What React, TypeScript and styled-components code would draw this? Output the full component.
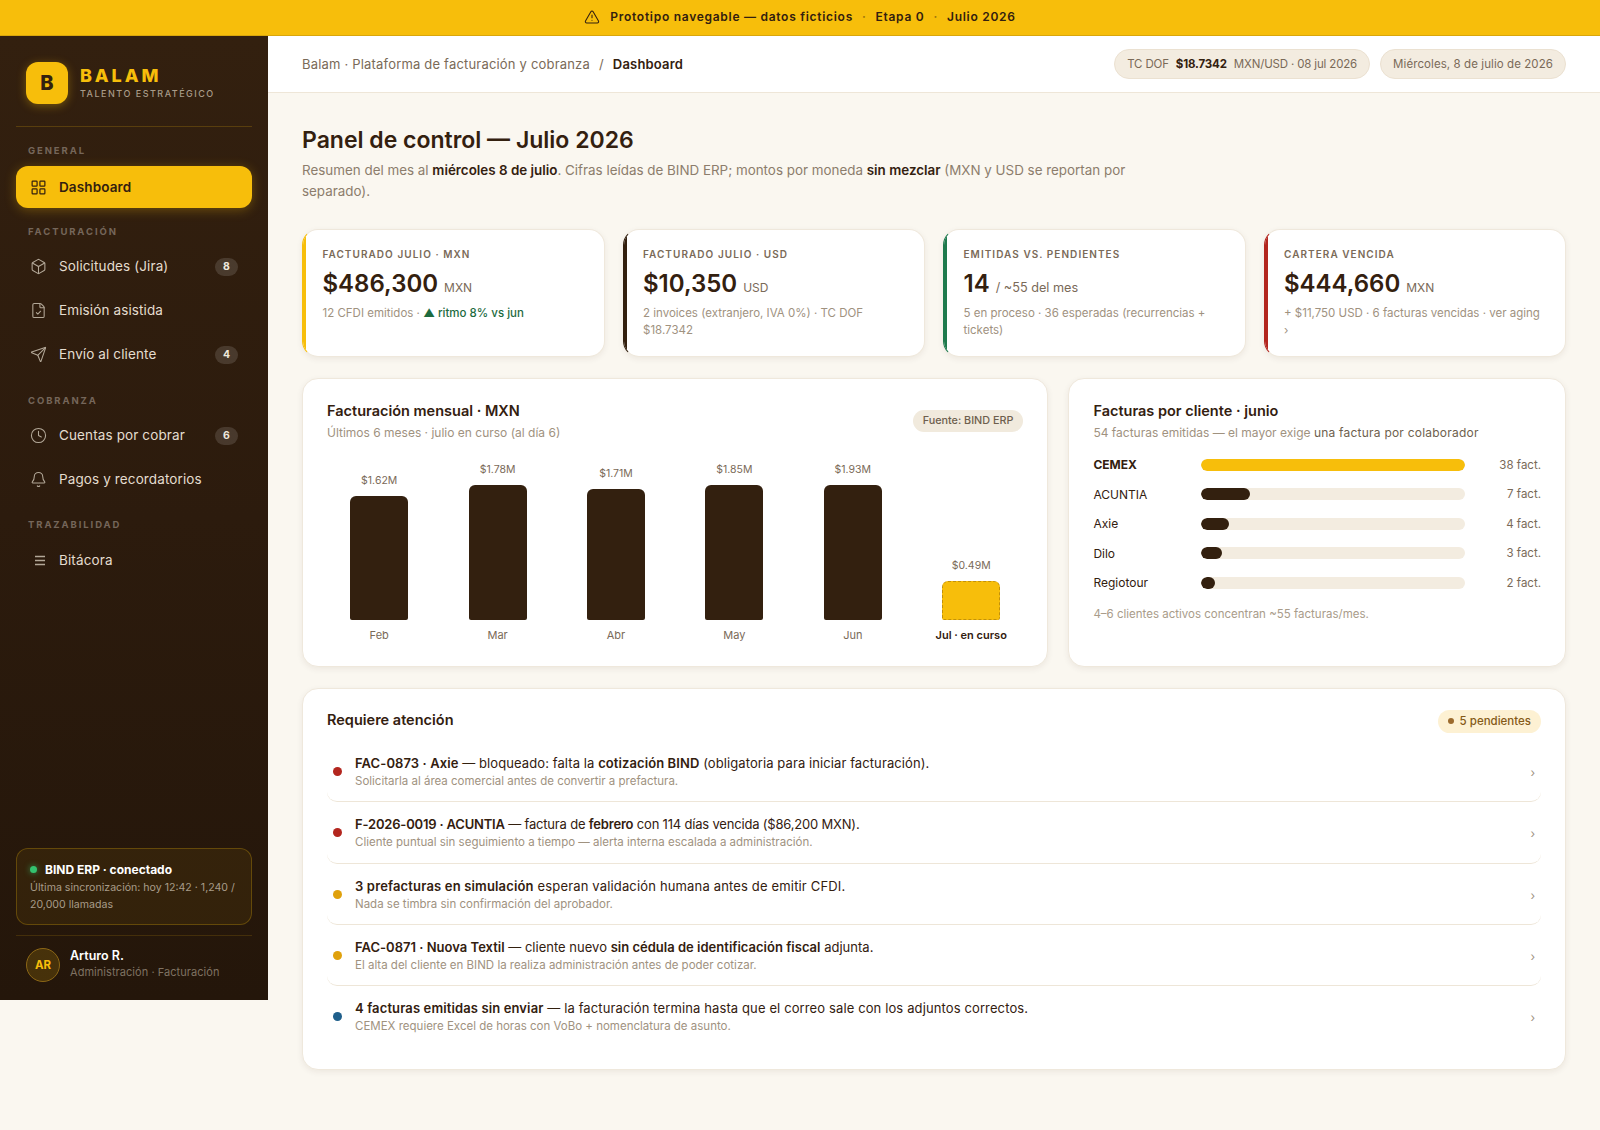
import React from 'react';
import styled, { createGlobalStyle } from 'styled-components';
import { Bell, Box, Clock, FileCheck, LayoutGrid, Send, TriangleAlert } from 'lucide-react';

const GOLD = '#f7be0b';
const DARK = '#33200f';

const GlobalStyle = createGlobalStyle`
  html, body {
    margin: 0;
    padding: 0;
    background: #faf7f0;
  }
  body {
    font-family: 'Inter', 'Noto Sans', sans-serif;
    color: ${DARK};
  }
  * {
    box-sizing: border-box;
  }
`;

const Page = styled.div`
  min-height: 1130px;
  display: flex;
  flex-direction: column;
`;

const Banner = styled.div`
  height: 36px;
  padding-bottom: 2px;
  display: flex;
  align-items: center;
  justify-content: center;
  gap: 10px;
  background: ${GOLD};
  border-bottom: 1px solid #d9a60c;
  font-size: 12px;
  font-weight: 600;
  letter-spacing: 0.72px;
  color: ${DARK};
`;

const BannerDot = styled.span`
  opacity: 0.45;
  margin: 0 -1px;
`;

const Shell = styled.div`
  display: flex;
  flex: 1;
  align-items: flex-start;
`;

const Sidebar = styled.aside`
  width: 268px;
  height: 964px;
  flex-shrink: 0;
  padding: 0 16px;
  display: flex;
  flex-direction: column;
  background: linear-gradient(180deg, #33200f 0%, #2c1b0d 50%, #24160a 100%);
`;

const Brand = styled.div`
  height: 91px;
  padding: 26px 10px 0;
  display: flex;
  gap: 12px;
  border-bottom: 1px solid rgba(247, 190, 11, 0.2);
`;

const LogoMark = styled.div`
  width: 42px;
  height: 42px;
  border-radius: 12px;
  display: flex;
  align-items: center;
  justify-content: center;
  background: ${GOLD};
  color: ${DARK};
  font-size: 20px;
  font-weight: 800;
  box-shadow: 0 2px 10px rgba(247, 190, 11, 0.35);
`;

const BrandText = styled.div`
  padding-top: 4px;
`;

const BrandName = styled.div`
  font-size: 18px;
  line-height: 20px;
  font-weight: 800;
  letter-spacing: 2.9px;
  color: ${GOLD};
`;

const BrandTag = styled.div`
  margin-top: 2px;
  font-size: 9px;
  line-height: 12px;
  font-weight: 500;
  letter-spacing: 1.5px;
  color: #a99b88;
`;

const SectionLabel = styled.div<{ $top?: number; $bottom?: number }>`
  margin: ${p => p.$top ?? 18}px 0 ${p => p.$bottom ?? 7}px;
  padding-left: 12px;
  height: 14px;
  line-height: 14px;
  font-size: 9.5px;
  font-weight: 700;
  letter-spacing: 1.9px;
  color: #75665a;
`;

const NavList = styled.div`
  display: flex;
  flex-direction: column;
  gap: 2px;
`;

const NavItem = styled.div<{ $active?: boolean }>`
  height: 42px;
  padding: 0 14px;
  display: flex;
  align-items: center;
  gap: 12px;
  border-radius: 12px;
  font-size: 13.5px;
  font-weight: ${p => (p.$active ? 600 : 400)};
  letter-spacing: 0.12px;
  color: ${p => (p.$active ? DARK : '#e4dccf')};
  background: ${p => (p.$active ? GOLD : 'transparent')};
  box-shadow: ${p => (p.$active ? '0 2px 12px rgba(247, 190, 11, 0.3)' : 'none')};
  svg {
    flex-shrink: 0;
    color: ${p => (p.$active ? DARK : '#b3a898')};
  }
`;

const NavText = styled.span`
  flex: 1;
  padding-bottom: 1px;
`;

const NavBadge = styled.span`
  width: 23px;
  height: 18px;
  border-radius: 9px;
  display: flex;
  align-items: center;
  justify-content: center;
  background: rgba(255, 255, 255, 0.13);
  color: #efe8dc;
  font-size: 10.5px;
  font-weight: 700;
`;

const SidebarSpacer = styled.div`
  flex: 1;
`;

const StatusBox = styled.div`
  height: 77px;
  padding: 12px 13px;
  border-radius: 12px;
  border: 1px solid rgba(247, 190, 11, 0.25);
  background: rgba(247, 190, 11, 0.07);
`;

const StatusTitle = styled.div`
  display: flex;
  align-items: center;
  gap: 8px;
  height: 17px;
  font-size: 12px;
  font-weight: 700;
  color: #fff;
`;

const StatusDot = styled.span`
  width: 7px;
  height: 7px;
  border-radius: 50%;
  background: #34c26f;
  box-shadow: 0 0 6px rgba(52, 194, 111, 0.7);
`;

const StatusText = styled.div`
  margin-top: 1px;
  font-size: 10.6px;
  line-height: 17px;
  color: #a89c89;
`;

const UserRow = styled.div`
  height: 65px;
  margin-top: 10px;
  padding: 12px 10px 0;
  display: flex;
  gap: 10px;
  border-top: 1px solid rgba(247, 190, 11, 0.15);
`;

const Avatar = styled.div`
  width: 34px;
  height: 34px;
  border-radius: 50%;
  display: flex;
  align-items: center;
  justify-content: center;
  background: rgba(247, 190, 11, 0.16);
  border: 1px solid #8c6716;
  color: ${GOLD};
  font-size: 11.5px;
  font-weight: 700;
`;

const UserName = styled.div`
  font-size: 12.5px;
  line-height: 16px;
  font-weight: 600;
  color: #fff;
`;

const UserRole = styled.div`
  font-size: 11px;
  line-height: 16px;
  letter-spacing: 0.05px;
  color: #7f7262;
`;

const Main = styled.main`
  flex: 1;
  min-width: 0;
`;

const Topbar = styled.header`
  height: 57px;
  padding: 0 34px;
  display: flex;
  align-items: center;
  justify-content: space-between;
  background: #fff;
  border-bottom: 1px solid #eee6d8;
`;

const Crumbs = styled.div`
  padding-bottom: 1px;
  display: flex;
  align-items: center;
  gap: 9px;
  font-size: 13px;
  letter-spacing: 0.19px;
  color: #7a6a58;
`;

const CrumbCurrent = styled.span`
  font-weight: 600;
  color: ${DARK};
`;

const TopPills = styled.div`
  display: flex;
  gap: 10px;
`;

const TopPill = styled.div<{ $dense?: boolean }>`
  height: 30px;
  padding: 0 12px 1px;
  display: flex;
  align-items: center;
  gap: 7px;
  border-radius: 15px;
  background: #f3ece0;
  border: 1px solid #ebe1d1;
  font-size: 11.5px;
  letter-spacing: ${p => (p.$dense ? '-0.16px' : '0.08px')};
  color: #7a6a58;
  b {
    font-weight: 700;
    color: ${DARK};
  }
`;

const Content = styled.div`
  padding: 29px 34px 40px;
`;

const Title = styled.h1`
  margin: 0;
  font-size: 23px;
  line-height: 36px;
  font-weight: 600;
  color: ${DARK};
`;

const Lead = styled.p`
  margin: 2px 0 0;
  max-width: 860px;
  font-size: 13.4px;
  line-height: 20.5px;
  color: #8c7d6c;
  b {
    font-weight: 600;
    color: ${DARK};
  }
`;

const KpiRow = styled.div`
  margin-top: 27.5px;
  display: grid;
  grid-template-columns: repeat(4, 1fr);
  gap: 18px;
`;

const Card = styled.section`
  background: #fff;
  border: 1px solid #efe8dc;
  border-radius: 16px;
  box-shadow: 0 2px 6px rgba(51, 32, 15, 0.07);
`;

const KpiCard = styled(Card)<{ $accent: string }>`
  position: relative;
  overflow: hidden;
  height: 128px;
  padding: 17.5px 22px 0 19.5px;
  border-left-color: ${p => p.$accent};
  &::before {
    content: '';
    position: absolute;
    left: 0;
    top: 0;
    bottom: 0;
    width: 3px;
    background: ${p => p.$accent};
  }
`;

const KpiLabel = styled.div`
  font-size: 10px;
  line-height: 14px;
  font-weight: 600;
  letter-spacing: 1.05px;
  color: #7a6a58;
`;

const KpiValue = styled.div`
  margin-top: 5px;
  height: 36px;
  display: flex;
  align-items: baseline;
  gap: 6px;
  font-size: 24px;
  line-height: 36px;
  font-weight: 600;
  color: ${DARK};
`;

const KpiUnit = styled.span<{ $long?: boolean }>`
  font-size: ${p => (p.$long ? '12.7px' : '12px')};
  font-weight: 400;
  color: #7a6a58;
`;

const KpiSub = styled.div`
  margin-top: 3px;
  font-size: 11.5px;
  line-height: 16.5px;
  color: #a0927f;
`;

const Up = styled.span`
  font-weight: 500;
  color: #1d6b3f;
`;

const ChartRow = styled.div`
  margin-top: 21px;
  display: grid;
  grid-template-columns: 3fr 2fr;
  gap: 20px;
`;

const Panel = styled(Card)`
  padding: 20px 24px 0;
`;

const ChartPanel = styled(Panel)`
  height: 289px;
`;

const PanelHead = styled.div`
  display: flex;
  align-items: flex-start;
  justify-content: space-between;
`;

const PanelTitle = styled.h2`
  margin: 0;
  font-size: 14.5px;
  line-height: 24px;
  font-weight: 600;
  color: ${DARK};
`;

const PanelSub = styled.div`
  margin-top: 1px;
  font-size: 12px;
  line-height: 18px;
  color: #a0927f;
  b {
    font-weight: 400;
    letter-spacing: 0.22px;
    color: #6e5f4e;
  }
`;

const SourcePill = styled.span`
  margin-top: 11px;
  height: 22px;
  padding: 0 10px;
  display: flex;
  align-items: center;
  border-radius: 11px;
  background: #f1eadd;
  font-size: 10.8px;
  font-weight: 500;
  color: #6e5f4e;
`;

const Bars = styled.div`
  margin-top: 11px;
  height: 190.5px;
  display: grid;
  grid-template-columns: repeat(6, 1fr);
  gap: 14px;
`;

const BarCol = styled.div`
  display: flex;
  flex-direction: column;
  align-items: center;
  justify-content: flex-end;
`;

const BarValue = styled.div`
  margin-bottom: 7px;
  font-size: 10.5px;
  line-height: 16px;
  color: #7a6a58;
`;

const Bar = styled.div<{ $current?: boolean }>`
  width: 58px;
  border-radius: 6px 6px 2px 2px;
  background: ${p => (p.$current ? GOLD : DARK)};
  border: ${p => (p.$current ? '1px dashed #c2910a' : 'none')};
`;

const BarMonth = styled.div<{ $current?: boolean }>`
  margin-top: 7px;
  font-size: 11px;
  line-height: 16px;
  font-weight: ${p => (p.$current ? 600 : 400)};
  color: ${p => (p.$current ? DARK : '#7a6a58')};
`;

const ClientList = styled.div`
  margin-top: 14px;
  display: flex;
  flex-direction: column;
  gap: 11.5px;
`;

const ClientRow = styled.div`
  height: 18px;
  display: grid;
  grid-template-columns: 96px 1fr 64px;
  column-gap: 12px;
  align-items: center;
`;

const ClientName = styled.div<{ $top?: boolean }>`
  font-size: 12px;
  font-weight: ${p => (p.$top ? 700 : 400)};
  color: ${DARK};
`;

const Track = styled.div`
  height: 12px;
  border-radius: 6px;
  background: #f3ece0;
  overflow: hidden;
`;

const Fill = styled.div<{ $top?: boolean }>`
  height: 100%;
  border-radius: 6px;
  background: ${p => (p.$top ? GOLD : DARK)};
`;

const ClientCount = styled.div`
  text-align: right;
  font-size: 11.5px;
  color: #7a6a58;
`;

const ClientNote = styled.div`
  margin-top: 14px;
  font-size: 11.5px;
  line-height: 17px;
  color: #a99c8a;
`;

const AttentionPanel = styled(Panel)`
  margin-top: 21px;
  height: 382px;
`;

const AttentionHead = styled.div`
  height: 32.5px;
  display: flex;
  align-items: flex-start;
  justify-content: space-between;
  ${PanelTitle} {
    margin-top: -1px;
  }
`;

const PendingPill = styled.span`
  margin-top: 1.5px;
  height: 23px;
  padding: 0 10px 1px;
  display: flex;
  align-items: center;
  gap: 6px;
  border-radius: 12px;
  background: #fdf1d3;
  font-size: 11.5px;
  font-weight: 500;
  color: #855a17;
  &::before {
    content: '';
    width: 6px;
    height: 6px;
    border-radius: 50%;
    background: #9c6b2e;
  }
`;

const AlertRow = styled.div<{ $last?: boolean }>`
  height: 61.35px;
  padding: 12px 6px 0;
  display: flex;
  align-items: flex-start;
  gap: 13px;
  border-radius: 0 0 10px 10px;
  border-bottom: ${p => (p.$last ? 'none' : '1px solid #eee6d8')};
`;

const AlertDot = styled.span<{ $color: string }>`
  width: 9px;
  height: 9px;
  margin-top: 14px;
  flex-shrink: 0;
  border-radius: 50%;
  background: ${p => p.$color};
`;

const AlertBody = styled.div`
  flex: 1;
`;

const AlertTitle = styled.div<{ $track: number }>`
  font-size: 13px;
  line-height: 20px;
  letter-spacing: ${p => p.$track}px;
  color: ${DARK};
  b {
    font-weight: 600;
  }
`;

const AlertSub = styled.div`
  font-size: 11.5px;
  line-height: 17px;
  color: #a0927f;
`;

const Chevron = styled.span`
  margin-top: 12px;
  font-size: 12px;
  line-height: 16px;
  color: #a0927f;
`;

const MenuLines: React.FC = () => (
  <svg width="17" height="17" viewBox="0 0 17 17" fill="none" stroke="currentColor" strokeWidth="1.4">
    <path d="M5 4.5h10M5 8.5h10M5 12.5h10" />
  </svg>
);

const months = [
  { month: 'Feb', value: '$1.62M', height: 124 },
  { month: 'Mar', value: '$1.78M', height: 135 },
  { month: 'Abr', value: '$1.71M', height: 131 },
  { month: 'May', value: '$1.85M', height: 135 },
  { month: 'Jun', value: '$1.93M', height: 135 },
  { month: 'Jul · en curso', value: '$0.49M', height: 39, current: true },
];

const clients = [
  { name: 'CEMEX', count: 38 },
  { name: 'ACUNTIA', count: 7 },
  { name: 'Axie', count: 4 },
  { name: 'Dilo', count: 3 },
  { name: 'Regiotour', count: 2 },
];

const Sidebarnav: React.FC = () => (
  <Sidebar>
    <Brand>
      <LogoMark>B</LogoMark>
      <BrandText>
        <BrandName>BALAM</BrandName>
        <BrandTag>TALENTO ESTRATÉGICO</BrandTag>
      </BrandText>
    </Brand>
    <SectionLabel $top={17} $bottom={8}>GENERAL</SectionLabel>
    <NavList>
      <NavItem $active>
        <LayoutGrid size={17} strokeWidth={1.7} />
        <NavText>Dashboard</NavText>
      </NavItem>
    </NavList>
    <SectionLabel $top={16.5}>FACTURACIÓN</SectionLabel>
    <NavList>
      <NavItem>
        <Box size={17} strokeWidth={1.5} />
        <NavText>Solicitudes (Jira)</NavText>
        <NavBadge>8</NavBadge>
      </NavItem>
      <NavItem>
        <FileCheck size={17} strokeWidth={1.5} />
        <NavText>Emisión asistida</NavText>
      </NavItem>
      <NavItem>
        <Send size={17} strokeWidth={1.5} />
        <NavText>Envío al cliente</NavText>
        <NavBadge>4</NavBadge>
      </NavItem>
    </NavList>
    <SectionLabel>COBRANZA</SectionLabel>
    <NavList>
      <NavItem>
        <Clock size={17} strokeWidth={1.5} />
        <NavText>Cuentas por cobrar</NavText>
        <NavBadge>6</NavBadge>
      </NavItem>
      <NavItem>
        <Bell size={17} strokeWidth={1.5} />
        <NavText>Pagos y recordatorios</NavText>
      </NavItem>
    </NavList>
    <SectionLabel $top={17} $bottom={8}>TRAZABILIDAD</SectionLabel>
    <NavList>
      <NavItem>
        <MenuLines />
        <NavText>Bitácora</NavText>
      </NavItem>
    </NavList>
    <SidebarSpacer />
    <StatusBox>
      <StatusTitle>
        <StatusDot />
        BIND ERP · conectado
      </StatusTitle>
      <StatusText>Última sincronización: hoy 12:42 · 1,240 / 20,000 llamadas</StatusText>
    </StatusBox>
    <UserRow>
      <Avatar>AR</Avatar>
      <div>
        <UserName>Arturo R.</UserName>
        <UserRole>Administración · Facturación</UserRole>
      </div>
    </UserRow>
  </Sidebar>
);

export default function App() {
  return (
    <Page>
      <GlobalStyle />
      <Banner>
        <TriangleAlert size={16} strokeWidth={1.6} />
        <span>Prototipo navegable — datos ficticios</span>
        <BannerDot>·</BannerDot>
        <span>Etapa 0</span>
        <BannerDot>·</BannerDot>
        <span>Julio 2026</span>
      </Banner>
      <Shell>
        <Sidebarnav />
        <Main>
          <Topbar>
            <Crumbs>
              <span>Balam · Plataforma de facturación y cobranza</span>
              <span>/</span>
              <CrumbCurrent>Dashboard</CrumbCurrent>
            </Crumbs>
            <TopPills>
              <TopPill $dense>
                TC DOF <b>$18.7342</b> MXN/USD · 08 jul 2026
              </TopPill>
              <TopPill>Miércoles, 8 de julio de 2026</TopPill>
            </TopPills>
          </Topbar>
          <Content>
            <Title>Panel de control — Julio 2026</Title>
            <Lead>
              Resumen del mes al <b>miércoles 8 de julio</b>. Cifras leídas de BIND ERP; montos por moneda{' '}
              <b>sin mezclar</b> (MXN y USD se reportan por
              <br />
              separado).
            </Lead>
            <KpiRow>
              <KpiCard $accent={GOLD}>
                <KpiLabel>FACTURADO JULIO · MXN</KpiLabel>
                <KpiValue>
                  $486,300 <KpiUnit>MXN</KpiUnit>
                </KpiValue>
                <KpiSub>
                  12 CFDI emitidos · <Up>▲ ritmo 8% vs jun</Up>
                </KpiSub>
              </KpiCard>
              <KpiCard $accent={DARK}>
                <KpiLabel>FACTURADO JULIO · USD</KpiLabel>
                <KpiValue>
                  $10,350 <KpiUnit>USD</KpiUnit>
                </KpiValue>
                <KpiSub>2 invoices (extranjero, IVA 0%) · TC DOF $18.7342</KpiSub>
              </KpiCard>
              <KpiCard $accent="#1f7a4d">
                <KpiLabel>EMITIDAS VS. PENDIENTES</KpiLabel>
                <KpiValue>
                  14 <KpiUnit $long>/ ~55 del mes</KpiUnit>
                </KpiValue>
                <KpiSub>5 en proceso · 36 esperadas (recurrencias + tickets)</KpiSub>
              </KpiCard>
              <KpiCard $accent="#b3261e">
                <KpiLabel>CARTERA VENCIDA</KpiLabel>
                <KpiValue>
                  $444,660 <KpiUnit>MXN</KpiUnit>
                </KpiValue>
                <KpiSub>+ $11,750 USD · 6 facturas vencidas · ver aging ›</KpiSub>
              </KpiCard>
            </KpiRow>
            <ChartRow>
              <ChartPanel>
                <PanelHead>
                  <div>
                    <PanelTitle>Facturación mensual · MXN</PanelTitle>
                    <PanelSub>Últimos 6 meses · julio en curso (al día 6)</PanelSub>
                  </div>
                  <SourcePill>Fuente: BIND ERP</SourcePill>
                </PanelHead>
                <Bars>
                  {months.map(m => (
                    <BarCol key={m.month}>
                      <BarValue>{m.value}</BarValue>
                      <Bar $current={m.current} style={{ height: m.height }} />
                      <BarMonth $current={m.current}>{m.month}</BarMonth>
                    </BarCol>
                  ))}
                </Bars>
              </ChartPanel>
              <ChartPanel>
                <PanelTitle>Facturas por cliente · junio</PanelTitle>
                <PanelSub>
                  54 facturas emitidas — el mayor exige <b>una factura por colaborador</b>
                </PanelSub>
                <ClientList>
                  {clients.map((c, i) => (
                    <ClientRow key={c.name}>
                      <ClientName $top={i === 0}>{c.name}</ClientName>
                      <Track>
                        <Fill $top={i === 0} style={{ width: `${Math.max((c.count / 38) * 100, 5.3)}%` }} />
                      </Track>
                      <ClientCount>{c.count} fact.</ClientCount>
                    </ClientRow>
                  ))}
                </ClientList>
                <ClientNote>4–6 clientes activos concentran ~55 facturas/mes.</ClientNote>
              </ChartPanel>
            </ChartRow>
            <AttentionPanel>
              <AttentionHead>
                <PanelTitle>Requiere atención</PanelTitle>
                <PendingPill>5 pendientes</PendingPill>
              </AttentionHead>
              <AlertRow>
                <AlertDot $color="#b3261e" />
                <AlertBody>
                  <AlertTitle $track={0.09}>
                    <b>FAC-0873 · Axie</b> — bloqueado: falta la <b>cotización BIND</b> (obligatoria para iniciar
                    facturación).
                  </AlertTitle>
                  <AlertSub>Solicitarla al área comercial antes de convertir a prefactura.</AlertSub>
                </AlertBody>
                <Chevron>›</Chevron>
              </AlertRow>
              <AlertRow>
                <AlertDot $color="#b3261e" />
                <AlertBody>
                  <AlertTitle $track={-0.19}>
                    <b>F-2026-0019 · ACUNTIA</b> — factura de <b>febrero</b> con 114 días vencida ($86,200 MXN).
                  </AlertTitle>
                  <AlertSub>Cliente puntual sin seguimiento a tiempo — alerta interna escalada a administración.</AlertSub>
                </AlertBody>
                <Chevron>›</Chevron>
              </AlertRow>
              <AlertRow>
                <AlertDot $color="#e0a10c" />
                <AlertBody>
                  <AlertTitle $track={0.16}>
                    <b>3 prefacturas en simulación</b> esperan validación humana antes de emitir CFDI.
                  </AlertTitle>
                  <AlertSub>Nada se timbra sin confirmación del aprobador.</AlertSub>
                </AlertBody>
                <Chevron>›</Chevron>
              </AlertRow>
              <AlertRow>
                <AlertDot $color="#e0a10c" />
                <AlertBody>
                  <AlertTitle $track={0.01}>
                    <b>FAC-0871 · Nuova Textil</b> — cliente nuevo <b>sin cédula de identificación fiscal</b> adjunta.
                  </AlertTitle>
                  <AlertSub>El alta del cliente en BIND la realiza administración antes de poder cotizar.</AlertSub>
                </AlertBody>
                <Chevron>›</Chevron>
              </AlertRow>
              <AlertRow $last>
                <AlertDot $color="#1f5f8b" />
                <AlertBody>
                  <AlertTitle $track={0.12}>
                    <b>4 facturas emitidas sin enviar</b> — la facturación termina hasta que el correo sale con los
                    adjuntos correctos.
                  </AlertTitle>
                  <AlertSub>CEMEX requiere Excel de horas con VoBo + nomenclatura de asunto.</AlertSub>
                </AlertBody>
                <Chevron>›</Chevron>
              </AlertRow>
            </AttentionPanel>
          </Content>
        </Main>
      </Shell>
    </Page>
  );
}
